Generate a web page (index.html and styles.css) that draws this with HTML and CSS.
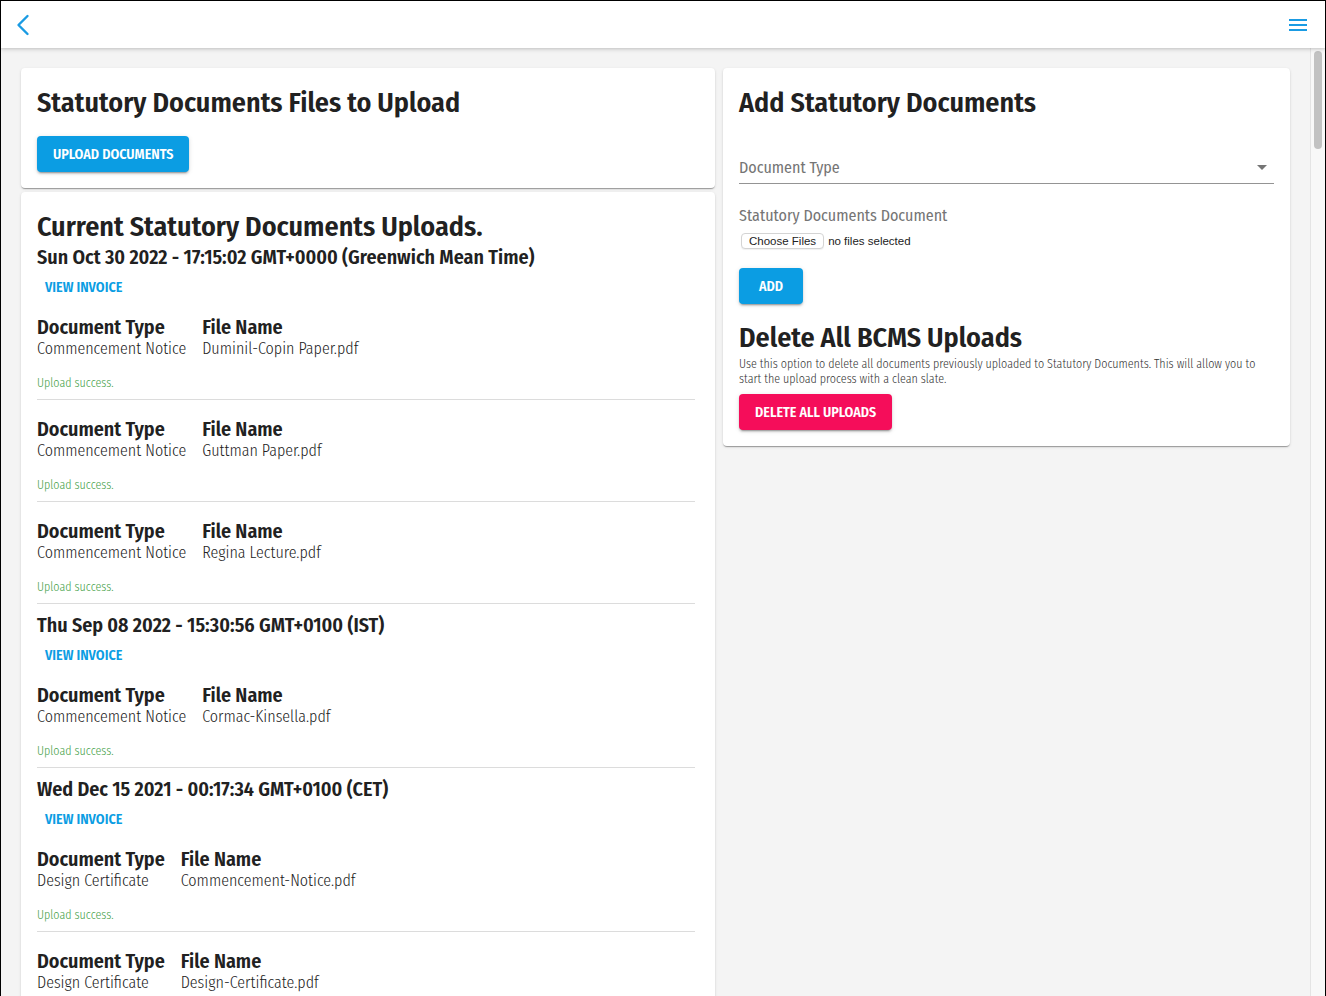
FILE: index.html
```html
<!DOCTYPE html>
<html lang="en">
<head>
<meta charset="utf-8">
<title>Statutory Documents</title>
<link rel="stylesheet" href="styles.css">
</head>
<body>
<div class="frame">
  <header class="topbar">
    <button class="icon-btn back" aria-label="Back">
      <svg width="14" height="22" viewBox="0 0 14 22"><polyline points="11.5,2 2.5,11 11.5,20" fill="none" stroke="#1a9be3" stroke-width="2.4" stroke-linecap="round" stroke-linejoin="round"/></svg>
    </button>
    <button class="icon-btn menu" aria-label="Menu">
      <svg width="18" height="14" viewBox="0 0 18 14"><rect x="0" y="1" width="18" height="2" fill="#1a9be3"/><rect x="0" y="6" width="18" height="2" fill="#1a9be3"/><rect x="0" y="11" width="18" height="2" fill="#1a9be3"/></svg>
    </button>
  </header>

  <div class="body-row">
    <main class="scroller">
      <div class="grid">
        <div class="col">
          <section class="card">
            <h1 class="title">Statutory Documents Files to Upload</h1>
            <button class="btn btn-blue upload-btn">UPLOAD DOCUMENTS</button>
          </section>

          <section class="card list-card">
            <h1 class="title">Current Statutory Documents Uploads.</h1>

            <h2 class="date first">Sun Oct 30 2022 - 17:15:02 GMT+0000 (Greenwich Mean Time)</h2>
            <button class="link-btn">VIEW INVOICE</button>
            <div class="entry">
              <div class="cols">
                <div class="cell"><div class="k">Document Type</div><div class="v">Commencement Notice</div></div>
                <div class="cell"><div class="k">File Name</div><div class="v">Duminil-Copin Paper.pdf</div></div>
              </div>
              <div class="ok">Upload success.</div>
            </div>
            <div class="entry">
              <div class="cols">
                <div class="cell"><div class="k">Document Type</div><div class="v">Commencement Notice</div></div>
                <div class="cell"><div class="k">File Name</div><div class="v">Guttman Paper.pdf</div></div>
              </div>
              <div class="ok">Upload success.</div>
            </div>
            <div class="entry">
              <div class="cols">
                <div class="cell"><div class="k">Document Type</div><div class="v">Commencement Notice</div></div>
                <div class="cell"><div class="k">File Name</div><div class="v">Regina Lecture.pdf</div></div>
              </div>
              <div class="ok">Upload success.</div>
            </div>

            <h2 class="date">Thu Sep 08 2022 - 15:30:56 GMT+0100 (IST)</h2>
            <button class="link-btn">VIEW INVOICE</button>
            <div class="entry">
              <div class="cols">
                <div class="cell"><div class="k">Document Type</div><div class="v">Commencement Notice</div></div>
                <div class="cell"><div class="k">File Name</div><div class="v">Cormac-Kinsella.pdf</div></div>
              </div>
              <div class="ok">Upload success.</div>
            </div>

            <h2 class="date">Wed Dec 15 2021 - 00:17:34 GMT+0100 (CET)</h2>
            <button class="link-btn">VIEW INVOICE</button>
            <div class="entry">
              <div class="cols">
                <div class="cell"><div class="k">Document Type</div><div class="v">Design Certificate</div></div>
                <div class="cell"><div class="k">File Name</div><div class="v">Commencement-Notice.pdf</div></div>
              </div>
              <div class="ok">Upload success.</div>
            </div>
            <div class="entry">
              <div class="cols">
                <div class="cell"><div class="k">Document Type</div><div class="v">Design Certificate</div></div>
                <div class="cell"><div class="k">File Name</div><div class="v">Design-Certificate.pdf</div></div>
              </div>
            </div>
          </section>
        </div>

        <div class="col">
          <section class="card side-card">
            <h1 class="title">Add Statutory Documents</h1>
            <div class="select">
              <span class="select-label">Document Type</span>
              <svg class="caret" width="10" height="5" viewBox="0 0 10 5"><polygon points="0,0 10,0 5,5" fill="#757575"/></svg>
            </div>
            <div class="field-label">Statutory Documents Document</div>
            <div class="file-row">
              <span class="file-btn">Choose Files</span>
              <span class="file-text">no files selected</span>
            </div>
            <button class="btn btn-blue add-btn">ADD</button>
            <h1 class="title delete-title">Delete All BCMS Uploads</h1>
            <p class="note">Use this option to delete all documents previously uploaded to Statutory Documents. This will allow you to start the upload process with a clean slate.</p>
            <button class="btn btn-pink">DELETE ALL UPLOADS</button>
          </section>
        </div>
      </div>
    </main>
    <div class="rail" aria-hidden="true"><div class="thumb"></div></div>
  </div>
</div>
</body>
</html>
```
FILE: styles.css
```css
* { box-sizing: border-box; }

html, body {
  margin: 0;
  padding: 0;
  height: 100%;
  overflow: hidden;
}

body {
  font-family: "Fira Sans Condensed", "Roboto Condensed", "Liberation Sans Narrow", sans-serif;
  color: #212121;
  background: #fff;
}

.frame {
  height: 100vh;
  display: flex;
  flex-direction: column;
  border: 1px solid #000;
  border-bottom: 0;
  background: #f4f4f4;
}

.topbar {
  height: 47px;
  flex: 0 0 47px;
  background: #fff;
  display: flex;
  align-items: center;
  justify-content: space-between;
  padding: 0 18px 0 15px;
  box-shadow: 0 2px 4px rgba(0,0,0,.12), 0 1px 2px rgba(0,0,0,.08);
  position: relative;
  z-index: 2;
}

.icon-btn {
  border: 0;
  background: none;
  padding: 0;
  margin: 0;
  display: flex;
  align-items: center;
  cursor: pointer;
}

.body-row {
  flex: 1 1 auto;
  min-height: 0;
  display: flex;
}

.scroller {
  flex: 1 1 auto;
  min-width: 0;
  overflow-y: auto;
  scrollbar-width: none;
  padding: 20px;
}

.scroller::-webkit-scrollbar { display: none; }

.rail {
  flex: 0 0 15px;
  background: #f8f8f8;
  border-left: 1px solid #e4e4e4;
  padding: 3px 0 0 3px;
}

.thumb {
  width: 8px;
  height: 98px;
  border-radius: 4px;
  background: #c2c2c2;
}

.grid {
  display: grid;
  grid-template-columns: 694fr 567fr;
  gap: 8px;
  align-items: start;
}

.col {
  display: flex;
  flex-direction: column;
  gap: 4px;
}

.card {
  background: #fff;
  border-radius: 4px;
  padding: 16px;
  box-shadow: 0 2px 1px -1px rgba(0,0,0,.2), 0 1px 1px 0 rgba(0,0,0,.14), 0 1px 3px 0 rgba(0,0,0,.12);
}

.title {
  margin: 0;
  padding-top: 2px;
  font-size: 28px;
  line-height: 34px;
  font-weight: 600;
  color: #212121;
}

.btn {
  font-family: inherit;
  border: 0;
  border-radius: 4px;
  height: 36px;
  min-width: 64px;
  padding: 0 16px;
  font-size: 14px;
  font-weight: 600;
  color: #fff;
  cursor: pointer;
  box-shadow: 0 3px 1px -2px rgba(0,0,0,.2), 0 2px 2px 0 rgba(0,0,0,.14), 0 1px 5px 0 rgba(0,0,0,.12);
  display: block;
}

.btn-blue { background: #0b9de3; }
.btn-pink { background: #f50d5a; }

.upload-btn { margin-top: 16px; }

.list-card { padding-right: 20px; padding-bottom: 40px; }

.date {
  margin: 9px 0 0;
  font-size: 20px;
  line-height: 24px;
  font-weight: 600;
  color: #212121;
}

.date.first { margin-top: 1px; }

.link-btn {
  font-family: inherit;
  display: block;
  border: 0;
  background: none;
  height: 36px;
  padding: 0 8px;
  font-size: 14px;
  font-weight: 600;
  color: #0b9de3;
  cursor: pointer;
}

.entry {
  padding-top: 10px;
  padding-bottom: 8px;
  border-bottom: 1px solid #dcdcdc;
}

.entry + .entry { padding-top: 17px; }

.entry:last-child { border-bottom: 0; }

.cols {
  display: flex;
  gap: 16px;
}

.k {
  font-size: 20px;
  line-height: 24px;
  font-weight: 600;
  color: #212121;
}

.v {
  font-size: 16px;
  line-height: 20px;
  font-weight: 300;
  color: #222;
}

.ok {
  margin-top: 16px;
  font-size: 12px;
  line-height: 16px;
  font-weight: 300;
  color: #43a047;
}

.side-card { padding-bottom: 16px; }

.select {
  margin-top: 14px;
  height: 50px;
  border-bottom: 1px solid #949494;
  display: flex;
  align-items: flex-end;
  justify-content: space-between;
  padding: 0 7px 5px 0;
}

.select-label {
  font-size: 16px;
  line-height: 20px;
  font-weight: 400;
  color: #757575;
}

.caret { margin-bottom: 8px; }

.field-label {
  margin-top: 22px;
  font-size: 16px;
  line-height: 20px;
  font-weight: 400;
  color: #757575;
}

.file-row {
  margin-top: 7px;
  display: flex;
  align-items: center;
  gap: 4px;
  font-family: "Liberation Sans", Arial, sans-serif;
  font-size: 11.5px;
  color: #222;
}

.file-btn {
  margin-left: 2px;
  height: 16px;
  display: inline-flex;
  align-items: center;
  padding: 0 7px;
  border: 1px solid #d4d4d4;
  border-radius: 4px;
  background: #fff;
  box-shadow: 0 1px 1px rgba(0,0,0,.06);
}

.add-btn { margin-top: 19px; }

.delete-title { margin-top: 15px; }

.note {
  margin: 2px 0 0;
  font-size: 12px;
  line-height: 15px;
  font-weight: 300;
  color: #333;
}

.btn-pink { margin-top: 7px; }
```
